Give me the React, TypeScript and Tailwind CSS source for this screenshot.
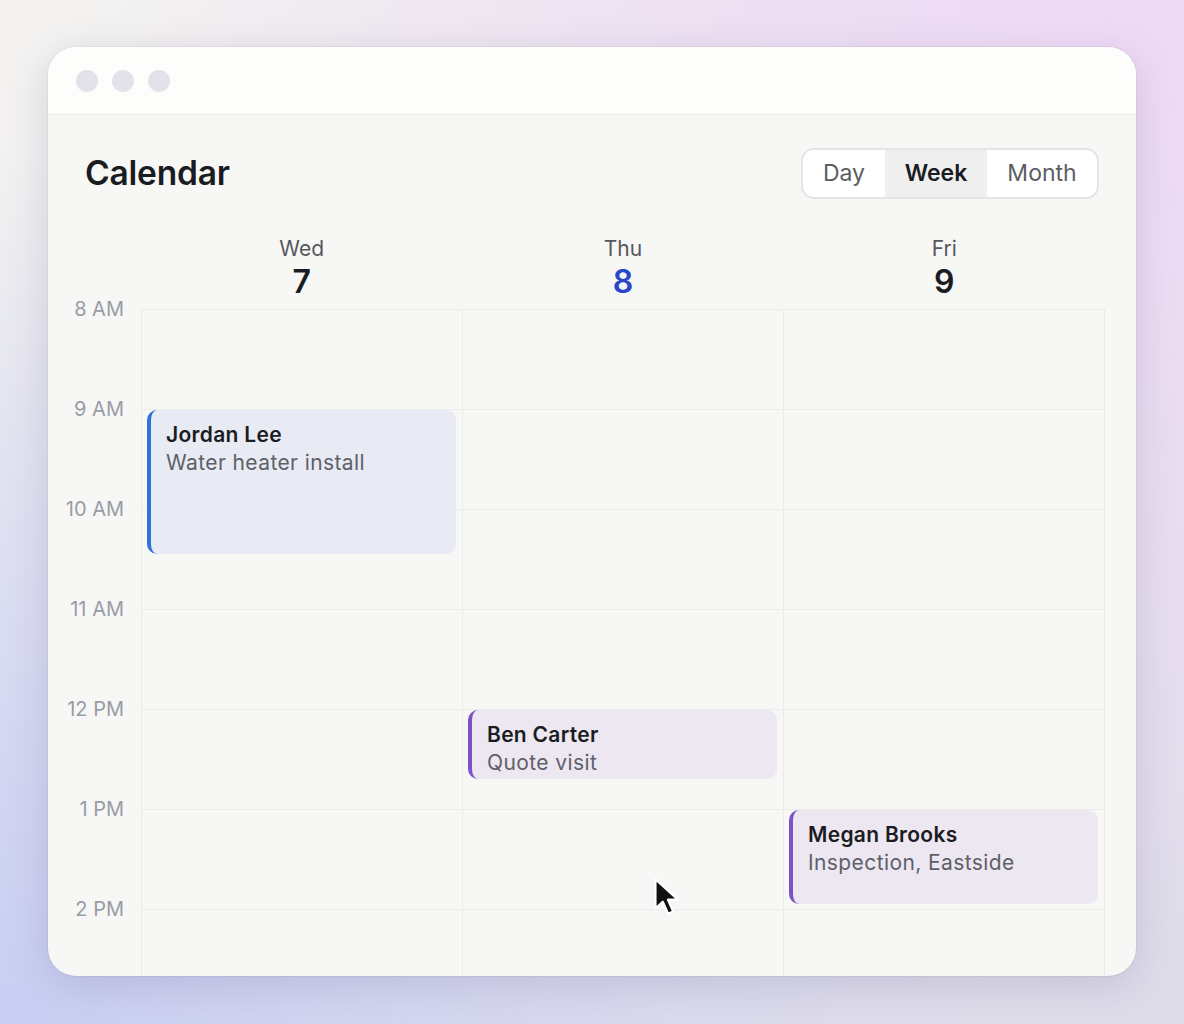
import React from "react";

const HOURS = ["8 AM", "9 AM", "10 AM", "11 AM", "12 PM", "1 PM", "2 PM"];

const DAYS = [
  { name: "Wed", num: "7", today: false },
  { name: "Thu", num: "8", today: true },
  { name: "Fri", num: "9", today: false },
];

type Evt = {
  day: number;
  start: number; // hours from 8 AM
  len: number;
  who: string;
  what: string;
  tone: "blue" | "purple";
};

const EVENTS: Evt[] = [
  { day: 0, start: 1, len: 1.5, who: "Jordan Lee", what: "Water heater install", tone: "blue" },
  { day: 1, start: 4, len: 0.75, who: "Ben Carter", what: "Quote visit", tone: "purple" },
  { day: 2, start: 5, len: 1, who: "Megan Brooks", what: "Inspection, Eastside", tone: "purple" },
];

function Cursor() {
  return (
    <svg width="32" height="42" viewBox="0 0 30 40" className="pointer-events-none absolute left-[652px] top-[876px]">
      <path
        d="M3 3 L3 31 L10 24.5 L15 36 L20 33.8 L15 22.6 L24.5 22.6 Z"
        fill="#111"
        stroke="#fff"
        strokeWidth="2.2"
        strokeLinejoin="round"
      />
    </svg>
  );
}

function Segmented() {
  return (
    <div className="flex h-[51px] overflow-hidden rounded-[13px] border-2 border-[#e4e4ea] bg-white text-[23px]">
      <div className="flex w-[82px] items-center justify-center text-[#5b5d63]">Day</div>
      <div className="flex w-[102px] items-center justify-center bg-[#efefef] font-semibold text-[#1b1c1f]">Week</div>
      <div className="flex w-[110px] items-center justify-center text-[#5b5d63]">Month</div>
    </div>
  );
}

function EventCard({ e }: { e: Evt }) {
  const blue = e.tone === "blue";
  return (
    <div
      className={
        "absolute left-[5px] right-[6px] overflow-hidden rounded-[10px] border-l-4 pl-[15px] pt-[11px] " +
        (blue ? "border-[#2f72d8] bg-[#e8ebf4]" : "border-[#7d52c9] bg-[#ede7f2]")
      }
      style={{ top: e.start * 100 + 1, height: e.len * 100 - 6 }}
    >
      <div className="text-[21px] font-semibold leading-[28px] tracking-[0.3px] text-[#1b1c1f]">{e.who}</div>
      <div className="text-[21px] leading-[28px] tracking-[0.4px] text-[#5e6068]">{e.what}</div>
    </div>
  );
}

export default function App() {
  return (
    <div
      className="relative h-[1024px] w-[1184px] overflow-hidden bg-[radial-gradient(ellipse_at_100%_0%,#efd9f6,transparent_65%),radial-gradient(ellipse_at_0%_100%,#c8cef3,transparent_60%),linear-gradient(135deg,#f4f3f1,#dedbea)] font-['Inter','Noto_Sans',sans-serif]"
    >
      <div className="absolute left-[48px] top-[47px] flex h-[929px] w-[1088px] flex-col overflow-hidden rounded-[28px] bg-[#f7f7f5] shadow-[0_10px_40px_rgba(80,70,120,0.18),0_0_0_1px_rgba(0,0,0,0.04)]">
        {/* title bar */}
        <div className="flex h-[68px] shrink-0 items-center gap-[14px] border-b border-[#ebebe8] bg-[#fdfdfb] pl-[28px]">
          <div className="h-[22px] w-[22px] rounded-full bg-[#e2e2ea]" />
          <div className="h-[22px] w-[22px] rounded-full bg-[#e2e2ea]" />
          <div className="h-[22px] w-[22px] rounded-full bg-[#e2e2ea]" />
        </div>

        <div className="flex flex-col pt-[33px]">
          <div className="flex items-center justify-between pl-[37px] pr-[37px]">
            <h1 className="text-[33.5px] font-semibold tracking-[-0.2px] text-[#1b1c1f]">Calendar</h1>
            <Segmented />
          </div>

          {/* day headers */}
          <div className="mt-[36px] flex pl-[93px]">
            {DAYS.map((d) => (
              <div key={d.name} className="flex w-[321.33px] flex-col items-center">
                <div className="text-[21px] leading-[28px] text-[#55575d]">{d.name}</div>
                <div
                  className={
                    "text-[32px] font-semibold leading-[37px] " + (d.today ? "text-[#2a47c9]" : "text-[#1b1c1f]")
                  }
                >
                  {d.num}
                </div>
              </div>
            ))}
          </div>

          {/* grid */}
          <div className="mt-[9px] flex">
            <div className="w-[93px] shrink-0">
              {HOURS.map((h) => (
                <div key={h} className="h-[100px] pr-[17px] text-right">
                  <div className="-translate-y-1/2 text-[20px] leading-[24px] text-[#999ca5]">{h}</div>
                </div>
              ))}
            </div>
            <div className="flex w-[964px] border-l border-[#ebebe9]">
              {DAYS.map((d, i) => (
                <div key={d.name} className="relative w-[321.33px] border-r border-[#ebebe9]">
                  {HOURS.map((h) => (
                    <div key={h} className="h-[100px] border-t border-[#ebebe9]" />
                  ))}
                  {EVENTS.filter((e) => e.day === i).map((e) => (
                    <EventCard key={e.who} e={e} />
                  ))}
                </div>
              ))}
            </div>
          </div>
        </div>
      </div>
      <Cursor />
    </div>
  );
}
